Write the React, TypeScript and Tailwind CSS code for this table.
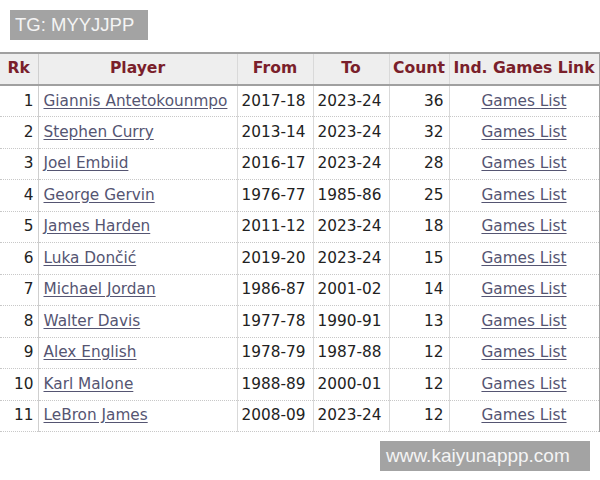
import React from "react";

const rows: [number, string, string, string, number][] = [
  [1, "Giannis Antetokounmpo", "2017-18", "2023-24", 36],
  [2, "Stephen Curry", "2013-14", "2023-24", 32],
  [3, "Joel Embiid", "2016-17", "2023-24", 28],
  [4, "George Gervin", "1976-77", "1985-86", 25],
  [5, "James Harden", "2011-12", "2023-24", 18],
  [6, "Luka Dončić", "2019-20", "2023-24", 15],
  [7, "Michael Jordan", "1986-87", "2001-02", 14],
  [8, "Walter Davis", "1977-78", "1990-91", 13],
  [9, "Alex English", "1978-79", "1987-88", 12],
  [10, "Karl Malone", "1988-89", "2000-01", 12],
  [11, "LeBron James", "2008-09", "2023-24", 12],
];

export default function App() {
  return (
    <div
      className="w-[600px] h-[480px] bg-white relative overflow-hidden"
      style={{ fontFamily: '"DejaVu Sans", Verdana, sans-serif' }}
    >
      <div className="pt-[10px] pl-[10px]">
        <div
          className="w-[138px] h-[30px] bg-[#a3a3a3] text-[#f4f4f4] text-[18.5px] leading-[30px] pl-[5px]"
          style={{ fontFamily: '"Liberation Sans", Arial, sans-serif' }}
        >
          TG: MYYJJPP
        </div>
      </div>
      <table className="mt-[12px] w-[599px] border-collapse table-fixed text-[15.3px] text-[#222]">
        <colgroup>
          <col className="w-[38px]" />
          <col className="w-[199px]" />
          <col className="w-[76px]" />
          <col className="w-[76px]" />
          <col className="w-[60px]" />
          <col className="w-[150px]" />
        </colgroup>
        <thead>
          <tr className="bg-[#eeeeee] h-[32px] border-t-2 border-b-2 border-[#a0a0a0] text-[#7a1f2b] font-bold text-[15.6px]">
            <th className="text-center border-r border-[#cfcfcf] px-0 whitespace-nowrap">Rk</th>
            <th className="text-center border-r border-[#d9d9d9] whitespace-nowrap">Player</th>
            <th className="text-center border-r border-[#d9d9d9] whitespace-nowrap">From</th>
            <th className="text-center border-r border-[#d9d9d9] whitespace-nowrap">To</th>
            <th className="text-center border-r border-[#d9d9d9] whitespace-nowrap">Count</th>
            <th className="text-center border-r border-[#a0a0a0] whitespace-nowrap">Ind. Games Link</th>
          </tr>
        </thead>
        <tbody>
          {rows.map(([rk, name, from, to, count]) => (
            <tr key={rk} className="h-[31.5px] border-b border-dotted border-[#c8c8c8]">
              <td className="text-right pr-[4px] border-r border-[#cfcfcf]">{rk}</td>
              <td className="pl-[5px] border-r border-[#d9d9d9] whitespace-nowrap">
                <span className="text-[#555572] underline underline-offset-2">{name}</span>
              </td>
              <td className="pl-[4px] border-r border-[#d9d9d9] whitespace-nowrap">{from}</td>
              <td className="pl-[4px] border-r border-[#d9d9d9] whitespace-nowrap">{to}</td>
              <td className="text-right pr-[5px] border-r border-[#d9d9d9]">{count}</td>
              <td className="text-center border-r border-[#a0a0a0] whitespace-nowrap">
                <span className="text-[#555572] underline underline-offset-2">Games List</span>
              </td>
            </tr>
          ))}
        </tbody>
      </table>
      <div className="flex justify-end pr-[10px] pt-[9px]">
        <div
          className="w-[210px] h-[30px] bg-[#a3a3a3] text-[#f4f4f4] text-[19px] leading-[30px] pl-[6px]"
          style={{ fontFamily: '"Liberation Sans", Arial, sans-serif' }}
        >
          www.kaiyunappp.com
        </div>
      </div>
    </div>
  );
}
